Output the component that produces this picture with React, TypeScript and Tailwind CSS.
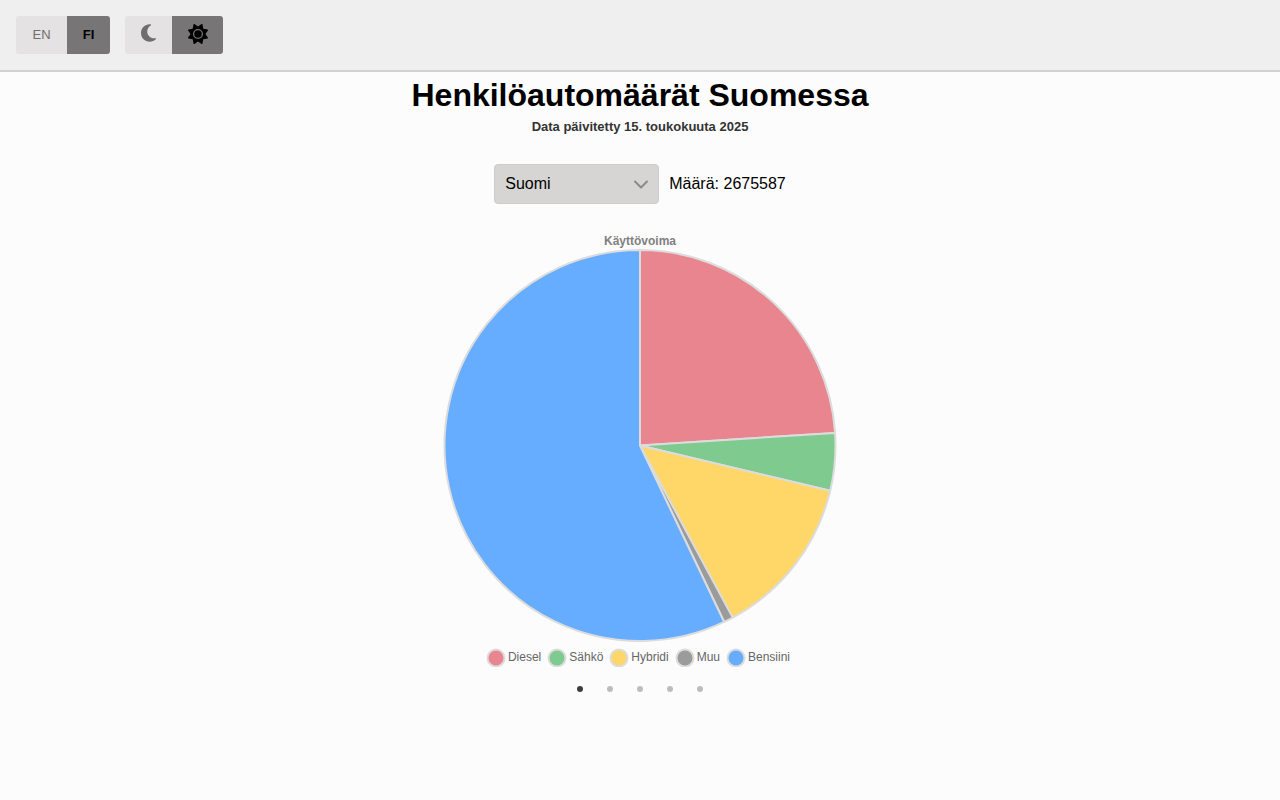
import { useState } from "react";
import { FaMoon, FaSun } from "react-icons/fa6";

const slices = [
  { label: "Diesel", color: "#e9858f", start: 0, end: 86.3 },
  { label: "Sähkö", color: "#7fca8f", start: 86.3, end: 103.4 },
  { label: "Hybridi", color: "#ffd769", start: 103.4, end: 151.7 },
  { label: "Muu", color: "#9b9b9b", start: 151.7, end: 154.5 },
  { label: "Bensiini", color: "#66adff", start: 154.5, end: 360 },
];

const CENTER_X = 197;
const CENTER_Y = 197.5;
const RADIUS = 195.5;

function point(angle: number) {
  const rad = (angle * Math.PI) / 180;
  return `${CENTER_X + RADIUS * Math.sin(rad)} ${CENTER_Y - RADIUS * Math.cos(rad)}`;
}

function slicePath(start: number, end: number) {
  const large = end - start > 180 ? 1 : 0;
  return `M${CENTER_X} ${CENTER_Y} L${point(start)} A${RADIUS} ${RADIUS} 0 ${large} 1 ${point(end)} Z`;
}

function ToggleButton({
  active,
  label,
  onClick,
  children,
}: {
  active: boolean;
  label: string;
  onClick: () => void;
  children: React.ReactNode;
}) {
  return (
    <button
      type="button"
      aria-label={label}
      aria-pressed={active}
      onClick={onClick}
      className={
        active
          ? "flex items-center justify-center bg-[#777575] px-[15px] font-bold text-black"
          : "flex items-center justify-center bg-[#e4e2e2] px-[15px] text-[#6e6e6e]"
      }
    >
      {children}
    </button>
  );
}

export default function App() {
  const [language, setLanguage] = useState("fi");
  const [theme, setTheme] = useState("light");
  const [page, setPage] = useState(0);

  return (
    <div className="min-h-screen bg-[#fcfcfc] font-['Liberation_Sans',Arial,sans-serif] text-black">
      <header className="flex gap-[15px] border-b-2 border-[#d2d2d2] bg-[#efefef] p-4 text-[13px]">
        <div className="flex h-[38px] overflow-hidden rounded-[3px]">
          <ToggleButton active={language === "en"} label="EN" onClick={() => setLanguage("en")}>
            <span className="w-[21px]">EN</span>
          </ToggleButton>
          <ToggleButton active={language === "fi"} label="FI" onClick={() => setLanguage("fi")}>
            <span className="w-[13px]">FI</span>
          </ToggleButton>
        </div>
        <div className="flex h-[38px] overflow-hidden rounded-[3px]">
          <ToggleButton active={theme === "dark"} label="Tumma" onClick={() => setTheme("dark")}>
            <span className="flex w-[17px] justify-center pb-1">
              <FaMoon className="h-[20px] w-[15px]" />
            </span>
          </ToggleButton>
          <ToggleButton active={theme === "light"} label="Vaalea" onClick={() => setTheme("light")}>
            <span className="flex w-[21px] justify-center pb-[2px]">
              <FaSun className="size-5" />
            </span>
          </ToggleButton>
        </div>
      </header>

      <main className="flex flex-col items-center pt-1">
        <h1 className="text-[32px] leading-[38px] font-bold">Henkilöautomäärät Suomessa</h1>
        <p className="mt-[5px] text-[13px] leading-4 font-bold text-[#333]">
          Data päivitetty 15. toukokuuta 2025
        </p>

        <div className="mt-[29px] flex items-center gap-[10px]">
          <div className="relative">
            <select
              aria-label="Alue"
              className="h-10 w-[165px] appearance-none rounded-[4px] border border-[#cccccc] bg-[#d7d5d3] px-[10px] text-base"
            >
              <option>Suomi</option>
            </select>
            <svg
              className="pointer-events-none absolute top-[11px] right-[8px] size-5"
              viewBox="0 0 20 20"
              fill="none"
              stroke="#8b8989"
              strokeWidth="2"
              strokeLinecap="round"
              strokeLinejoin="round"
              aria-hidden="true"
            >
              <path d="M4 6.5 L10 12.5 L16 6.5" />
            </svg>
          </div>
          <p className="text-base">Määrä: 2675587</p>
        </div>

        <section className="mt-[30px] flex flex-col items-center">
          <h2 className="text-[12px] leading-[14px] font-bold text-[#808080]">Käyttövoima</h2>
          <svg width="394" height="395" viewBox="0 0 394 395" role="img" aria-label="Käyttövoima">
            {slices.map((slice) => (
              <path
                key={slice.label}
                d={slicePath(slice.start, slice.end)}
                fill={slice.color}
                stroke="#dcdcdc"
                strokeWidth="2"
                strokeLinejoin="bevel"
              />
            ))}
          </svg>
          <ul className="mt-1 flex gap-[6px] pr-1 text-[12px] leading-5 text-[#666]">
            {slices.map((slice) => (
              <li key={slice.label} className="flex items-center gap-[2px]">
                <svg className="size-5" viewBox="0 0 20 20" aria-hidden="true">
                  <circle cx="10" cy="11" r="8.5" fill={slice.color} stroke="#dcdcdc" strokeWidth="2" />
                </svg>
                {slice.label}
              </li>
            ))}
          </ul>
        </section>

        <nav className="mt-3 flex gap-[10px]" aria-label="Kaaviot">
          {slices.map((slice, index) => (
            <button
              key={slice.label}
              type="button"
              aria-label={`Kaavio ${index + 1}`}
              onClick={() => setPage(index)}
              className="flex size-5 items-center justify-center"
            >
              <span
                className={
                  index === page
                    ? "size-[6px] rounded-full bg-[#3d3d3d]"
                    : "size-[6px] rounded-full bg-[#bdbdbd]"
                }
              />
            </button>
          ))}
        </nav>
      </main>
    </div>
  );
}
